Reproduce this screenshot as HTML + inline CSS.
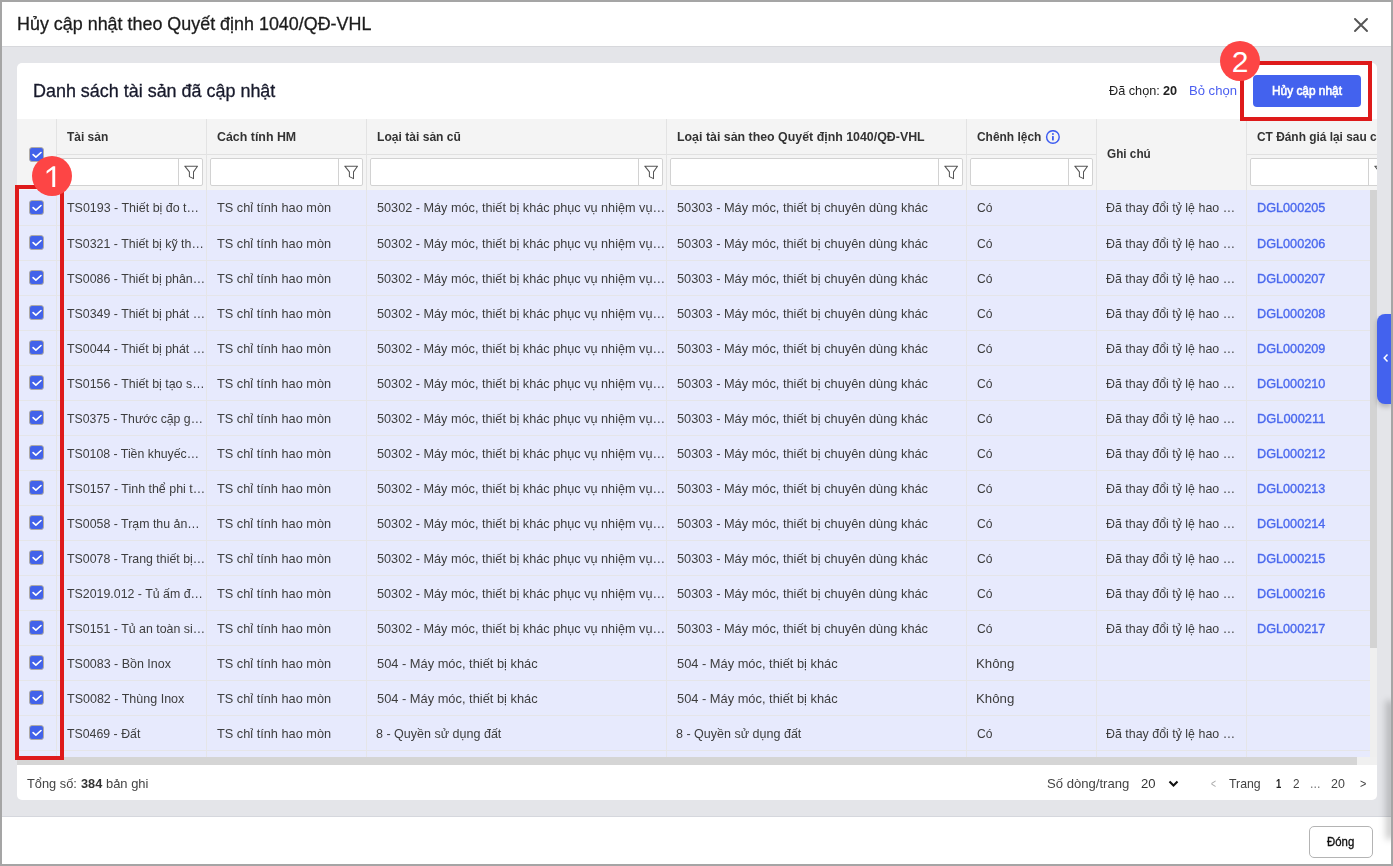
<!DOCTYPE html><html><head><meta charset="utf-8"><style>
*{box-sizing:border-box;margin:0;padding:0}
html,body{width:1393px;height:866px;overflow:hidden;background:#a5a5a5;font-family:"Liberation Sans",sans-serif;position:relative}
.a{position:absolute}
.t{position:absolute;white-space:nowrap;transform-origin:0 0}
.cb{position:absolute;width:15px;height:15px}
.inp{position:absolute;top:158px;height:28px;background:#fff;border:1px solid #d2d2d2;border-radius:2px}
.fb{position:absolute;right:0;top:0;width:24px;height:26px;border-left:1px solid #d2d2d2;display:flex;align-items:center;justify-content:center}
</style></head><body>

<div class="a" style="left:2px;top:2px;width:1389px;height:862px;background:#e4e5e9"></div>
<div class="a" style="left:2px;top:2px;width:1389px;height:44px;background:#fff"></div>
<div class="a" style="left:2px;top:46px;width:1389px;height:1px;background:#d7d8dc"></div>
<svg class="a" style="left:1354px;top:18px" width="14" height="14" viewBox="0 0 14 14"><path d="M1 1 L13 13 M13 1 L1 13" stroke="#555" stroke-width="1.9" stroke-linecap="round"/></svg>
<div class="a" style="left:17px;top:63px;width:1360px;height:737px;background:#fff;border-radius:5px;overflow:hidden"><div class="a" style="left:-17px;top:-63px;width:1393px;height:866px">
<div class="a" style="left:17px;top:119px;width:1360px;height:71px;background:#f4f4f4"></div>
<div class="a" style="left:57px;top:154px;width:1039px;height:1px;background:#e1e1e1"></div>
<div class="a" style="left:1247px;top:154px;width:130px;height:1px;background:#e1e1e1"></div>
<div class="a" style="left:56px;top:119px;width:1px;height:71px;background:#e3e3e3"></div>
<div class="a" style="left:206px;top:119px;width:1px;height:71px;background:#e3e3e3"></div>
<div class="a" style="left:366px;top:119px;width:1px;height:71px;background:#e3e3e3"></div>
<div class="a" style="left:666px;top:119px;width:1px;height:71px;background:#e3e3e3"></div>
<div class="a" style="left:966px;top:119px;width:1px;height:71px;background:#e3e3e3"></div>
<div class="a" style="left:1096px;top:119px;width:1px;height:71px;background:#e3e3e3"></div>
<div class="a" style="left:1246px;top:119px;width:1px;height:71px;background:#e3e3e3"></div>
<div class="inp" style="left:60px;width:143px"><div class="fb"><svg width="15" height="15" viewBox="0 0 15 15"><path d="M1.8 1.2 H14.5 L10.5 6.9 V13.6 L6.4 11.6 V6.9 Z" fill="none" stroke="#555" stroke-width="1.05" stroke-linejoin="round"/></svg></div></div>
<div class="inp" style="left:210px;width:153px"><div class="fb"><svg width="15" height="15" viewBox="0 0 15 15"><path d="M1.8 1.2 H14.5 L10.5 6.9 V13.6 L6.4 11.6 V6.9 Z" fill="none" stroke="#555" stroke-width="1.05" stroke-linejoin="round"/></svg></div></div>
<div class="inp" style="left:370px;width:293px"><div class="fb"><svg width="15" height="15" viewBox="0 0 15 15"><path d="M1.8 1.2 H14.5 L10.5 6.9 V13.6 L6.4 11.6 V6.9 Z" fill="none" stroke="#555" stroke-width="1.05" stroke-linejoin="round"/></svg></div></div>
<div class="inp" style="left:670px;width:293px"><div class="fb"><svg width="15" height="15" viewBox="0 0 15 15"><path d="M1.8 1.2 H14.5 L10.5 6.9 V13.6 L6.4 11.6 V6.9 Z" fill="none" stroke="#555" stroke-width="1.05" stroke-linejoin="round"/></svg></div></div>
<div class="inp" style="left:970px;width:123px"><div class="fb"><svg width="15" height="15" viewBox="0 0 15 15"><path d="M1.8 1.2 H14.5 L10.5 6.9 V13.6 L6.4 11.6 V6.9 Z" fill="none" stroke="#555" stroke-width="1.05" stroke-linejoin="round"/></svg></div></div>
<div class="inp" style="left:1250px;width:143px"><div class="fb"><svg width="15" height="15" viewBox="0 0 15 15"><path d="M1.8 1.2 H14.5 L10.5 6.9 V13.6 L6.4 11.6 V6.9 Z" fill="none" stroke="#555" stroke-width="1.05" stroke-linejoin="round"/></svg></div></div>
<div class="cb" style="left:29px;top:147px"><svg width="15" height="15" viewBox="0 0 15 15" style="position:absolute;left:0;top:0"><rect x="0.5" y="0.5" width="14" height="14" rx="2.6" fill="#4262ea" stroke="#b3ab9b" stroke-width="0.9"/><path d="M4.1 7.6 L6.9 10.1 L12 5.5" fill="none" stroke="#fff" stroke-width="1.65" stroke-linecap="round" stroke-linejoin="round"/></svg></div>
<svg class="a" style="left:1045px;top:130px" width="15" height="15" viewBox="0 0 15 15"><circle cx="7.9" cy="7.0" r="6.3" fill="none" stroke="#3d5cf0" stroke-width="1.45"/><rect x="7.0" y="3.2" width="1.8" height="1.6" fill="#3d5cf0"/><rect x="7.0" y="6.1" width="1.8" height="4.3" fill="#3d5cf0"/></svg>
<div class="a" style="left:1253px;top:75px;width:108px;height:32px;background:#4362ee;border-radius:4px"></div>
<div class="a" style="left:17px;top:190px;width:1353px;height:567px;overflow:hidden;background:#e7eafd"><div class="a" style="left:-17px;top:-190px;width:1393px;height:866px">
<div class="a" style="left:17px;top:225px;width:1353px;height:1px;background:#e5e5e8"></div>
<div class="a" style="left:17px;top:260px;width:1353px;height:1px;background:#e5e5e8"></div>
<div class="a" style="left:17px;top:295px;width:1353px;height:1px;background:#e5e5e8"></div>
<div class="a" style="left:17px;top:330px;width:1353px;height:1px;background:#e5e5e8"></div>
<div class="a" style="left:17px;top:365px;width:1353px;height:1px;background:#e5e5e8"></div>
<div class="a" style="left:17px;top:400px;width:1353px;height:1px;background:#e5e5e8"></div>
<div class="a" style="left:17px;top:435px;width:1353px;height:1px;background:#e5e5e8"></div>
<div class="a" style="left:17px;top:470px;width:1353px;height:1px;background:#e5e5e8"></div>
<div class="a" style="left:17px;top:505px;width:1353px;height:1px;background:#e5e5e8"></div>
<div class="a" style="left:17px;top:540px;width:1353px;height:1px;background:#e5e5e8"></div>
<div class="a" style="left:17px;top:575px;width:1353px;height:1px;background:#e5e5e8"></div>
<div class="a" style="left:17px;top:610px;width:1353px;height:1px;background:#e5e5e8"></div>
<div class="a" style="left:17px;top:645px;width:1353px;height:1px;background:#e5e5e8"></div>
<div class="a" style="left:17px;top:680px;width:1353px;height:1px;background:#e5e5e8"></div>
<div class="a" style="left:17px;top:715px;width:1353px;height:1px;background:#e5e5e8"></div>
<div class="a" style="left:17px;top:750px;width:1353px;height:1px;background:#e5e5e8"></div>
<div class="a" style="left:17px;top:785px;width:1353px;height:1px;background:#e5e5e8"></div>
<div class="a" style="left:56px;top:190px;width:1px;height:567px;background:#e5e5e8"></div>
<div class="a" style="left:206px;top:190px;width:1px;height:567px;background:#e5e5e8"></div>
<div class="a" style="left:366px;top:190px;width:1px;height:567px;background:#e5e5e8"></div>
<div class="a" style="left:666px;top:190px;width:1px;height:567px;background:#e5e5e8"></div>
<div class="a" style="left:966px;top:190px;width:1px;height:567px;background:#e5e5e8"></div>
<div class="a" style="left:1096px;top:190px;width:1px;height:567px;background:#e5e5e8"></div>
<div class="a" style="left:1246px;top:190px;width:1px;height:567px;background:#e5e5e8"></div>
<div class="cb" style="left:29px;top:200px"><svg width="15" height="15" viewBox="0 0 15 15" style="position:absolute;left:0;top:0"><rect x="0.5" y="0.5" width="14" height="14" rx="2.6" fill="#4262ea" stroke="#b3ab9b" stroke-width="0.9"/><path d="M4.1 7.6 L6.9 10.1 L12 5.5" fill="none" stroke="#fff" stroke-width="1.65" stroke-linecap="round" stroke-linejoin="round"/></svg></div>
<div class="cb" style="left:29px;top:235px"><svg width="15" height="15" viewBox="0 0 15 15" style="position:absolute;left:0;top:0"><rect x="0.5" y="0.5" width="14" height="14" rx="2.6" fill="#4262ea" stroke="#b3ab9b" stroke-width="0.9"/><path d="M4.1 7.6 L6.9 10.1 L12 5.5" fill="none" stroke="#fff" stroke-width="1.65" stroke-linecap="round" stroke-linejoin="round"/></svg></div>
<div class="cb" style="left:29px;top:270px"><svg width="15" height="15" viewBox="0 0 15 15" style="position:absolute;left:0;top:0"><rect x="0.5" y="0.5" width="14" height="14" rx="2.6" fill="#4262ea" stroke="#b3ab9b" stroke-width="0.9"/><path d="M4.1 7.6 L6.9 10.1 L12 5.5" fill="none" stroke="#fff" stroke-width="1.65" stroke-linecap="round" stroke-linejoin="round"/></svg></div>
<div class="cb" style="left:29px;top:305px"><svg width="15" height="15" viewBox="0 0 15 15" style="position:absolute;left:0;top:0"><rect x="0.5" y="0.5" width="14" height="14" rx="2.6" fill="#4262ea" stroke="#b3ab9b" stroke-width="0.9"/><path d="M4.1 7.6 L6.9 10.1 L12 5.5" fill="none" stroke="#fff" stroke-width="1.65" stroke-linecap="round" stroke-linejoin="round"/></svg></div>
<div class="cb" style="left:29px;top:340px"><svg width="15" height="15" viewBox="0 0 15 15" style="position:absolute;left:0;top:0"><rect x="0.5" y="0.5" width="14" height="14" rx="2.6" fill="#4262ea" stroke="#b3ab9b" stroke-width="0.9"/><path d="M4.1 7.6 L6.9 10.1 L12 5.5" fill="none" stroke="#fff" stroke-width="1.65" stroke-linecap="round" stroke-linejoin="round"/></svg></div>
<div class="cb" style="left:29px;top:375px"><svg width="15" height="15" viewBox="0 0 15 15" style="position:absolute;left:0;top:0"><rect x="0.5" y="0.5" width="14" height="14" rx="2.6" fill="#4262ea" stroke="#b3ab9b" stroke-width="0.9"/><path d="M4.1 7.6 L6.9 10.1 L12 5.5" fill="none" stroke="#fff" stroke-width="1.65" stroke-linecap="round" stroke-linejoin="round"/></svg></div>
<div class="cb" style="left:29px;top:410px"><svg width="15" height="15" viewBox="0 0 15 15" style="position:absolute;left:0;top:0"><rect x="0.5" y="0.5" width="14" height="14" rx="2.6" fill="#4262ea" stroke="#b3ab9b" stroke-width="0.9"/><path d="M4.1 7.6 L6.9 10.1 L12 5.5" fill="none" stroke="#fff" stroke-width="1.65" stroke-linecap="round" stroke-linejoin="round"/></svg></div>
<div class="cb" style="left:29px;top:445px"><svg width="15" height="15" viewBox="0 0 15 15" style="position:absolute;left:0;top:0"><rect x="0.5" y="0.5" width="14" height="14" rx="2.6" fill="#4262ea" stroke="#b3ab9b" stroke-width="0.9"/><path d="M4.1 7.6 L6.9 10.1 L12 5.5" fill="none" stroke="#fff" stroke-width="1.65" stroke-linecap="round" stroke-linejoin="round"/></svg></div>
<div class="cb" style="left:29px;top:480px"><svg width="15" height="15" viewBox="0 0 15 15" style="position:absolute;left:0;top:0"><rect x="0.5" y="0.5" width="14" height="14" rx="2.6" fill="#4262ea" stroke="#b3ab9b" stroke-width="0.9"/><path d="M4.1 7.6 L6.9 10.1 L12 5.5" fill="none" stroke="#fff" stroke-width="1.65" stroke-linecap="round" stroke-linejoin="round"/></svg></div>
<div class="cb" style="left:29px;top:515px"><svg width="15" height="15" viewBox="0 0 15 15" style="position:absolute;left:0;top:0"><rect x="0.5" y="0.5" width="14" height="14" rx="2.6" fill="#4262ea" stroke="#b3ab9b" stroke-width="0.9"/><path d="M4.1 7.6 L6.9 10.1 L12 5.5" fill="none" stroke="#fff" stroke-width="1.65" stroke-linecap="round" stroke-linejoin="round"/></svg></div>
<div class="cb" style="left:29px;top:550px"><svg width="15" height="15" viewBox="0 0 15 15" style="position:absolute;left:0;top:0"><rect x="0.5" y="0.5" width="14" height="14" rx="2.6" fill="#4262ea" stroke="#b3ab9b" stroke-width="0.9"/><path d="M4.1 7.6 L6.9 10.1 L12 5.5" fill="none" stroke="#fff" stroke-width="1.65" stroke-linecap="round" stroke-linejoin="round"/></svg></div>
<div class="cb" style="left:29px;top:585px"><svg width="15" height="15" viewBox="0 0 15 15" style="position:absolute;left:0;top:0"><rect x="0.5" y="0.5" width="14" height="14" rx="2.6" fill="#4262ea" stroke="#b3ab9b" stroke-width="0.9"/><path d="M4.1 7.6 L6.9 10.1 L12 5.5" fill="none" stroke="#fff" stroke-width="1.65" stroke-linecap="round" stroke-linejoin="round"/></svg></div>
<div class="cb" style="left:29px;top:620px"><svg width="15" height="15" viewBox="0 0 15 15" style="position:absolute;left:0;top:0"><rect x="0.5" y="0.5" width="14" height="14" rx="2.6" fill="#4262ea" stroke="#b3ab9b" stroke-width="0.9"/><path d="M4.1 7.6 L6.9 10.1 L12 5.5" fill="none" stroke="#fff" stroke-width="1.65" stroke-linecap="round" stroke-linejoin="round"/></svg></div>
<div class="cb" style="left:29px;top:655px"><svg width="15" height="15" viewBox="0 0 15 15" style="position:absolute;left:0;top:0"><rect x="0.5" y="0.5" width="14" height="14" rx="2.6" fill="#4262ea" stroke="#b3ab9b" stroke-width="0.9"/><path d="M4.1 7.6 L6.9 10.1 L12 5.5" fill="none" stroke="#fff" stroke-width="1.65" stroke-linecap="round" stroke-linejoin="round"/></svg></div>
<div class="cb" style="left:29px;top:690px"><svg width="15" height="15" viewBox="0 0 15 15" style="position:absolute;left:0;top:0"><rect x="0.5" y="0.5" width="14" height="14" rx="2.6" fill="#4262ea" stroke="#b3ab9b" stroke-width="0.9"/><path d="M4.1 7.6 L6.9 10.1 L12 5.5" fill="none" stroke="#fff" stroke-width="1.65" stroke-linecap="round" stroke-linejoin="round"/></svg></div>
<div class="cb" style="left:29px;top:725px"><svg width="15" height="15" viewBox="0 0 15 15" style="position:absolute;left:0;top:0"><rect x="0.5" y="0.5" width="14" height="14" rx="2.6" fill="#4262ea" stroke="#b3ab9b" stroke-width="0.9"/><path d="M4.1 7.6 L6.9 10.1 L12 5.5" fill="none" stroke="#fff" stroke-width="1.65" stroke-linecap="round" stroke-linejoin="round"/></svg></div>
<div class="t" style="left:66.50px;top:200.00px;font-size:13px;line-height:16px;color:#3d3d3d;transform:scaleX(0.9583)">TS0193 - Thiết bị đo t…</div>
<div class="t" style="left:216.90px;top:200.00px;font-size:13px;line-height:16px;color:#3d3d3d;transform:scaleX(0.9810)">TS chỉ tính hao mòn</div>
<div class="t" style="left:377.30px;top:200.00px;font-size:13px;line-height:16px;color:#3d3d3d;transform:scaleX(0.9751)">50302 - Máy móc, thiết bị khác phục vụ nhiệm vụ…</div>
<div class="t" style="left:677.10px;top:200.00px;font-size:13px;line-height:16px;color:#3d3d3d;transform:scaleX(0.9840)">50303 - Máy móc, thiết bị chuyên dùng khác</div>
<div class="t" style="left:976.60px;top:200.00px;font-size:13px;line-height:16px;color:#3d3d3d;transform:scaleX(0.9275)">Có</div>
<div class="t" style="left:1106.40px;top:200.00px;font-size:13px;line-height:16px;color:#3d3d3d;transform:scaleX(0.9551)">Đã thay đổi tỷ lệ hao …</div>
<div class="t" style="left:1256.63px;top:200.00px;font-size:13px;line-height:16px;color:#4a68ee;-webkit-text-stroke:0.36px #4a68ee;transform:scaleX(0.9742)">DGL000205</div>
<div class="t" style="left:66.50px;top:236.00px;font-size:13px;line-height:16px;color:#3d3d3d;transform:scaleX(0.9532)">TS0321 - Thiết bị kỹ th…</div>
<div class="t" style="left:216.90px;top:236.00px;font-size:13px;line-height:16px;color:#3d3d3d;transform:scaleX(0.9810)">TS chỉ tính hao mòn</div>
<div class="t" style="left:377.30px;top:236.00px;font-size:13px;line-height:16px;color:#3d3d3d;transform:scaleX(0.9751)">50302 - Máy móc, thiết bị khác phục vụ nhiệm vụ…</div>
<div class="t" style="left:677.10px;top:236.00px;font-size:13px;line-height:16px;color:#3d3d3d;transform:scaleX(0.9840)">50303 - Máy móc, thiết bị chuyên dùng khác</div>
<div class="t" style="left:976.60px;top:236.00px;font-size:13px;line-height:16px;color:#3d3d3d;transform:scaleX(0.9275)">Có</div>
<div class="t" style="left:1106.40px;top:236.00px;font-size:13px;line-height:16px;color:#3d3d3d;transform:scaleX(0.9551)">Đã thay đổi tỷ lệ hao …</div>
<div class="t" style="left:1256.63px;top:236.00px;font-size:13px;line-height:16px;color:#4a68ee;-webkit-text-stroke:0.36px #4a68ee;transform:scaleX(0.9742)">DGL000206</div>
<div class="t" style="left:66.50px;top:271.00px;font-size:13px;line-height:16px;color:#3d3d3d;transform:scaleX(0.9525)">TS0086 - Thiết bị phân…</div>
<div class="t" style="left:216.90px;top:271.00px;font-size:13px;line-height:16px;color:#3d3d3d;transform:scaleX(0.9810)">TS chỉ tính hao mòn</div>
<div class="t" style="left:377.30px;top:271.00px;font-size:13px;line-height:16px;color:#3d3d3d;transform:scaleX(0.9751)">50302 - Máy móc, thiết bị khác phục vụ nhiệm vụ…</div>
<div class="t" style="left:677.10px;top:271.00px;font-size:13px;line-height:16px;color:#3d3d3d;transform:scaleX(0.9840)">50303 - Máy móc, thiết bị chuyên dùng khác</div>
<div class="t" style="left:976.60px;top:271.00px;font-size:13px;line-height:16px;color:#3d3d3d;transform:scaleX(0.9275)">Có</div>
<div class="t" style="left:1106.40px;top:271.00px;font-size:13px;line-height:16px;color:#3d3d3d;transform:scaleX(0.9551)">Đã thay đổi tỷ lệ hao …</div>
<div class="t" style="left:1256.63px;top:271.00px;font-size:13px;line-height:16px;color:#4a68ee;-webkit-text-stroke:0.36px #4a68ee;transform:scaleX(0.9742)">DGL000207</div>
<div class="t" style="left:66.50px;top:306.00px;font-size:13px;line-height:16px;color:#3d3d3d;transform:scaleX(0.9526)">TS0349 - Thiết bị phát …</div>
<div class="t" style="left:216.90px;top:306.00px;font-size:13px;line-height:16px;color:#3d3d3d;transform:scaleX(0.9810)">TS chỉ tính hao mòn</div>
<div class="t" style="left:377.30px;top:306.00px;font-size:13px;line-height:16px;color:#3d3d3d;transform:scaleX(0.9751)">50302 - Máy móc, thiết bị khác phục vụ nhiệm vụ…</div>
<div class="t" style="left:677.10px;top:306.00px;font-size:13px;line-height:16px;color:#3d3d3d;transform:scaleX(0.9840)">50303 - Máy móc, thiết bị chuyên dùng khác</div>
<div class="t" style="left:976.60px;top:306.00px;font-size:13px;line-height:16px;color:#3d3d3d;transform:scaleX(0.9275)">Có</div>
<div class="t" style="left:1106.40px;top:306.00px;font-size:13px;line-height:16px;color:#3d3d3d;transform:scaleX(0.9551)">Đã thay đổi tỷ lệ hao …</div>
<div class="t" style="left:1256.63px;top:306.00px;font-size:13px;line-height:16px;color:#4a68ee;-webkit-text-stroke:0.36px #4a68ee;transform:scaleX(0.9742)">DGL000208</div>
<div class="t" style="left:66.50px;top:341.00px;font-size:13px;line-height:16px;color:#3d3d3d;transform:scaleX(0.9526)">TS0044 - Thiết bị phát …</div>
<div class="t" style="left:216.90px;top:341.00px;font-size:13px;line-height:16px;color:#3d3d3d;transform:scaleX(0.9810)">TS chỉ tính hao mòn</div>
<div class="t" style="left:377.30px;top:341.00px;font-size:13px;line-height:16px;color:#3d3d3d;transform:scaleX(0.9751)">50302 - Máy móc, thiết bị khác phục vụ nhiệm vụ…</div>
<div class="t" style="left:677.10px;top:341.00px;font-size:13px;line-height:16px;color:#3d3d3d;transform:scaleX(0.9840)">50303 - Máy móc, thiết bị chuyên dùng khác</div>
<div class="t" style="left:976.60px;top:341.00px;font-size:13px;line-height:16px;color:#3d3d3d;transform:scaleX(0.9275)">Có</div>
<div class="t" style="left:1106.40px;top:341.00px;font-size:13px;line-height:16px;color:#3d3d3d;transform:scaleX(0.9551)">Đã thay đổi tỷ lệ hao …</div>
<div class="t" style="left:1256.63px;top:341.00px;font-size:13px;line-height:16px;color:#4a68ee;-webkit-text-stroke:0.36px #4a68ee;transform:scaleX(0.9742)">DGL000209</div>
<div class="t" style="left:66.50px;top:376.00px;font-size:13px;line-height:16px;color:#3d3d3d;transform:scaleX(0.9532)">TS0156 - Thiết bị tạo s…</div>
<div class="t" style="left:216.90px;top:376.00px;font-size:13px;line-height:16px;color:#3d3d3d;transform:scaleX(0.9810)">TS chỉ tính hao mòn</div>
<div class="t" style="left:377.30px;top:376.00px;font-size:13px;line-height:16px;color:#3d3d3d;transform:scaleX(0.9751)">50302 - Máy móc, thiết bị khác phục vụ nhiệm vụ…</div>
<div class="t" style="left:677.10px;top:376.00px;font-size:13px;line-height:16px;color:#3d3d3d;transform:scaleX(0.9840)">50303 - Máy móc, thiết bị chuyên dùng khác</div>
<div class="t" style="left:976.60px;top:376.00px;font-size:13px;line-height:16px;color:#3d3d3d;transform:scaleX(0.9275)">Có</div>
<div class="t" style="left:1106.40px;top:376.00px;font-size:13px;line-height:16px;color:#3d3d3d;transform:scaleX(0.9551)">Đã thay đổi tỷ lệ hao …</div>
<div class="t" style="left:1256.63px;top:376.00px;font-size:13px;line-height:16px;color:#4a68ee;-webkit-text-stroke:0.36px #4a68ee;transform:scaleX(0.9742)">DGL000210</div>
<div class="t" style="left:66.50px;top:411.00px;font-size:13px;line-height:16px;color:#3d3d3d;transform:scaleX(0.9428)">TS0375 - Thước cặp g…</div>
<div class="t" style="left:216.90px;top:411.00px;font-size:13px;line-height:16px;color:#3d3d3d;transform:scaleX(0.9810)">TS chỉ tính hao mòn</div>
<div class="t" style="left:377.30px;top:411.00px;font-size:13px;line-height:16px;color:#3d3d3d;transform:scaleX(0.9751)">50302 - Máy móc, thiết bị khác phục vụ nhiệm vụ…</div>
<div class="t" style="left:677.10px;top:411.00px;font-size:13px;line-height:16px;color:#3d3d3d;transform:scaleX(0.9840)">50303 - Máy móc, thiết bị chuyên dùng khác</div>
<div class="t" style="left:976.60px;top:411.00px;font-size:13px;line-height:16px;color:#3d3d3d;transform:scaleX(0.9275)">Có</div>
<div class="t" style="left:1106.40px;top:411.00px;font-size:13px;line-height:16px;color:#3d3d3d;transform:scaleX(0.9551)">Đã thay đổi tỷ lệ hao …</div>
<div class="t" style="left:1256.61px;top:411.00px;font-size:13px;line-height:16px;color:#4a68ee;-webkit-text-stroke:0.36px #4a68ee;transform:scaleX(0.9880)">DGL000211</div>
<div class="t" style="left:66.50px;top:446.00px;font-size:13px;line-height:16px;color:#3d3d3d;transform:scaleX(0.9467)">TS0108 - Tiền khuyếc…</div>
<div class="t" style="left:216.90px;top:446.00px;font-size:13px;line-height:16px;color:#3d3d3d;transform:scaleX(0.9810)">TS chỉ tính hao mòn</div>
<div class="t" style="left:377.30px;top:446.00px;font-size:13px;line-height:16px;color:#3d3d3d;transform:scaleX(0.9751)">50302 - Máy móc, thiết bị khác phục vụ nhiệm vụ…</div>
<div class="t" style="left:677.10px;top:446.00px;font-size:13px;line-height:16px;color:#3d3d3d;transform:scaleX(0.9840)">50303 - Máy móc, thiết bị chuyên dùng khác</div>
<div class="t" style="left:976.60px;top:446.00px;font-size:13px;line-height:16px;color:#3d3d3d;transform:scaleX(0.9275)">Có</div>
<div class="t" style="left:1106.40px;top:446.00px;font-size:13px;line-height:16px;color:#3d3d3d;transform:scaleX(0.9551)">Đã thay đổi tỷ lệ hao …</div>
<div class="t" style="left:1256.63px;top:446.00px;font-size:13px;line-height:16px;color:#4a68ee;-webkit-text-stroke:0.36px #4a68ee;transform:scaleX(0.9742)">DGL000212</div>
<div class="t" style="left:66.50px;top:481.00px;font-size:13px;line-height:16px;color:#3d3d3d;transform:scaleX(0.9558)">TS0157 - Tinh thể phi t…</div>
<div class="t" style="left:216.90px;top:481.00px;font-size:13px;line-height:16px;color:#3d3d3d;transform:scaleX(0.9810)">TS chỉ tính hao mòn</div>
<div class="t" style="left:377.30px;top:481.00px;font-size:13px;line-height:16px;color:#3d3d3d;transform:scaleX(0.9751)">50302 - Máy móc, thiết bị khác phục vụ nhiệm vụ…</div>
<div class="t" style="left:677.10px;top:481.00px;font-size:13px;line-height:16px;color:#3d3d3d;transform:scaleX(0.9840)">50303 - Máy móc, thiết bị chuyên dùng khác</div>
<div class="t" style="left:976.60px;top:481.00px;font-size:13px;line-height:16px;color:#3d3d3d;transform:scaleX(0.9275)">Có</div>
<div class="t" style="left:1106.40px;top:481.00px;font-size:13px;line-height:16px;color:#3d3d3d;transform:scaleX(0.9551)">Đã thay đổi tỷ lệ hao …</div>
<div class="t" style="left:1256.63px;top:481.00px;font-size:13px;line-height:16px;color:#4a68ee;-webkit-text-stroke:0.36px #4a68ee;transform:scaleX(0.9742)">DGL000213</div>
<div class="t" style="left:66.50px;top:516.00px;font-size:13px;line-height:16px;color:#3d3d3d;transform:scaleX(0.9511)">TS0058 - Trạm thu ản…</div>
<div class="t" style="left:216.90px;top:516.00px;font-size:13px;line-height:16px;color:#3d3d3d;transform:scaleX(0.9810)">TS chỉ tính hao mòn</div>
<div class="t" style="left:377.30px;top:516.00px;font-size:13px;line-height:16px;color:#3d3d3d;transform:scaleX(0.9751)">50302 - Máy móc, thiết bị khác phục vụ nhiệm vụ…</div>
<div class="t" style="left:677.10px;top:516.00px;font-size:13px;line-height:16px;color:#3d3d3d;transform:scaleX(0.9840)">50303 - Máy móc, thiết bị chuyên dùng khác</div>
<div class="t" style="left:976.60px;top:516.00px;font-size:13px;line-height:16px;color:#3d3d3d;transform:scaleX(0.9275)">Có</div>
<div class="t" style="left:1106.40px;top:516.00px;font-size:13px;line-height:16px;color:#3d3d3d;transform:scaleX(0.9551)">Đã thay đổi tỷ lệ hao …</div>
<div class="t" style="left:1256.63px;top:516.00px;font-size:13px;line-height:16px;color:#4a68ee;-webkit-text-stroke:0.36px #4a68ee;transform:scaleX(0.9742)">DGL000214</div>
<div class="t" style="left:66.50px;top:551.00px;font-size:13px;line-height:16px;color:#3d3d3d;transform:scaleX(0.9510)">TS0078 - Trang thiết bị…</div>
<div class="t" style="left:216.90px;top:551.00px;font-size:13px;line-height:16px;color:#3d3d3d;transform:scaleX(0.9810)">TS chỉ tính hao mòn</div>
<div class="t" style="left:377.30px;top:551.00px;font-size:13px;line-height:16px;color:#3d3d3d;transform:scaleX(0.9751)">50302 - Máy móc, thiết bị khác phục vụ nhiệm vụ…</div>
<div class="t" style="left:677.10px;top:551.00px;font-size:13px;line-height:16px;color:#3d3d3d;transform:scaleX(0.9840)">50303 - Máy móc, thiết bị chuyên dùng khác</div>
<div class="t" style="left:976.60px;top:551.00px;font-size:13px;line-height:16px;color:#3d3d3d;transform:scaleX(0.9275)">Có</div>
<div class="t" style="left:1106.40px;top:551.00px;font-size:13px;line-height:16px;color:#3d3d3d;transform:scaleX(0.9551)">Đã thay đổi tỷ lệ hao …</div>
<div class="t" style="left:1256.63px;top:551.00px;font-size:13px;line-height:16px;color:#4a68ee;-webkit-text-stroke:0.36px #4a68ee;transform:scaleX(0.9742)">DGL000215</div>
<div class="t" style="left:66.50px;top:586.00px;font-size:13px;line-height:16px;color:#3d3d3d;transform:scaleX(0.9516)">TS2019.012 - Tủ ấm đ…</div>
<div class="t" style="left:216.90px;top:586.00px;font-size:13px;line-height:16px;color:#3d3d3d;transform:scaleX(0.9810)">TS chỉ tính hao mòn</div>
<div class="t" style="left:377.30px;top:586.00px;font-size:13px;line-height:16px;color:#3d3d3d;transform:scaleX(0.9751)">50302 - Máy móc, thiết bị khác phục vụ nhiệm vụ…</div>
<div class="t" style="left:677.10px;top:586.00px;font-size:13px;line-height:16px;color:#3d3d3d;transform:scaleX(0.9840)">50303 - Máy móc, thiết bị chuyên dùng khác</div>
<div class="t" style="left:976.60px;top:586.00px;font-size:13px;line-height:16px;color:#3d3d3d;transform:scaleX(0.9275)">Có</div>
<div class="t" style="left:1106.40px;top:586.00px;font-size:13px;line-height:16px;color:#3d3d3d;transform:scaleX(0.9551)">Đã thay đổi tỷ lệ hao …</div>
<div class="t" style="left:1256.63px;top:586.00px;font-size:13px;line-height:16px;color:#4a68ee;-webkit-text-stroke:0.36px #4a68ee;transform:scaleX(0.9742)">DGL000216</div>
<div class="t" style="left:66.50px;top:621.00px;font-size:13px;line-height:16px;color:#3d3d3d;transform:scaleX(0.9526)">TS0151 - Tủ an toàn si…</div>
<div class="t" style="left:216.90px;top:621.00px;font-size:13px;line-height:16px;color:#3d3d3d;transform:scaleX(0.9810)">TS chỉ tính hao mòn</div>
<div class="t" style="left:377.30px;top:621.00px;font-size:13px;line-height:16px;color:#3d3d3d;transform:scaleX(0.9751)">50302 - Máy móc, thiết bị khác phục vụ nhiệm vụ…</div>
<div class="t" style="left:677.10px;top:621.00px;font-size:13px;line-height:16px;color:#3d3d3d;transform:scaleX(0.9840)">50303 - Máy móc, thiết bị chuyên dùng khác</div>
<div class="t" style="left:976.60px;top:621.00px;font-size:13px;line-height:16px;color:#3d3d3d;transform:scaleX(0.9275)">Có</div>
<div class="t" style="left:1106.40px;top:621.00px;font-size:13px;line-height:16px;color:#3d3d3d;transform:scaleX(0.9551)">Đã thay đổi tỷ lệ hao …</div>
<div class="t" style="left:1256.63px;top:621.00px;font-size:13px;line-height:16px;color:#4a68ee;-webkit-text-stroke:0.36px #4a68ee;transform:scaleX(0.9742)">DGL000217</div>
<div class="t" style="left:66.50px;top:656.00px;font-size:13px;line-height:16px;color:#3d3d3d;transform:scaleX(0.9587)">TS0083 - Bồn Inox</div>
<div class="t" style="left:216.90px;top:656.00px;font-size:13px;line-height:16px;color:#3d3d3d;transform:scaleX(0.9810)">TS chỉ tính hao mòn</div>
<div class="t" style="left:376.50px;top:656.00px;font-size:13px;line-height:16px;color:#3d3d3d;transform:scaleX(0.9879)">504 - Máy móc, thiết bị khác</div>
<div class="t" style="left:676.50px;top:656.00px;font-size:13px;line-height:16px;color:#3d3d3d;transform:scaleX(0.9879)">504 - Máy móc, thiết bị khác</div>
<div class="t" style="left:975.78px;top:656.00px;font-size:13px;line-height:16px;color:#3d3d3d;transform:scaleX(1.0176)">Không</div>
<div class="t" style="left:66.50px;top:691.00px;font-size:13px;line-height:16px;color:#3d3d3d;transform:scaleX(0.9623)">TS0082 - Thùng Inox</div>
<div class="t" style="left:216.90px;top:691.00px;font-size:13px;line-height:16px;color:#3d3d3d;transform:scaleX(0.9810)">TS chỉ tính hao mòn</div>
<div class="t" style="left:376.50px;top:691.00px;font-size:13px;line-height:16px;color:#3d3d3d;transform:scaleX(0.9879)">504 - Máy móc, thiết bị khác</div>
<div class="t" style="left:676.50px;top:691.00px;font-size:13px;line-height:16px;color:#3d3d3d;transform:scaleX(0.9879)">504 - Máy móc, thiết bị khác</div>
<div class="t" style="left:975.78px;top:691.00px;font-size:13px;line-height:16px;color:#3d3d3d;transform:scaleX(1.0176)">Không</div>
<div class="t" style="left:66.50px;top:726.00px;font-size:13px;line-height:16px;color:#3d3d3d;transform:scaleX(0.9485)">TS0469 - Đất</div>
<div class="t" style="left:216.90px;top:726.00px;font-size:13px;line-height:16px;color:#3d3d3d;transform:scaleX(0.9810)">TS chỉ tính hao mòn</div>
<div class="t" style="left:376.40px;top:726.00px;font-size:13px;line-height:16px;color:#3d3d3d;transform:scaleX(0.9632)">8 - Quyền sử dụng đất</div>
<div class="t" style="left:676.40px;top:726.00px;font-size:13px;line-height:16px;color:#3d3d3d;transform:scaleX(0.9632)">8 - Quyền sử dụng đất</div>
<div class="t" style="left:976.60px;top:726.00px;font-size:13px;line-height:16px;color:#3d3d3d;transform:scaleX(0.9275)">Có</div>
<div class="t" style="left:1106.40px;top:726.00px;font-size:13px;line-height:16px;color:#3d3d3d;transform:scaleX(0.9551)">Đã thay đổi tỷ lệ hao …</div>
</div></div>
<div class="a" style="left:1370px;top:190px;width:7px;height:567px;background:#efefef"></div>
<div class="a" style="left:1370px;top:190px;width:7px;height:458px;background:#d3d3d3"></div>
<div class="a" style="left:17px;top:757px;width:1360px;height:8px;background:#f0f0f0"></div>
<div class="a" style="left:17px;top:757px;width:1340px;height:8px;background:#d5d5d5"></div>
<svg class="a" style="left:1168px;top:779.5px" width="11" height="8" viewBox="0 0 11 8"><path d="M1.5 1.5 L5.5 5.5 L9.5 1.5" fill="none" stroke="#111" stroke-width="2.1"/></svg>
<div class="t" style="left:32.71px;top:80.00px;font-size:18.2px;line-height:23px;color:#17192b;-webkit-text-stroke:0.3px #17192b;transform:scaleX(0.9863)">Danh sách tài sản đã cập nhật</div>
<div class="t" style="left:1108.70px;top:83.00px;font-size:13px;line-height:16px;color:#222;transform:scaleX(0.9763)">Đã chọn:</div>
<div class="t" style="left:1163.00px;top:83.00px;font-size:13px;line-height:16px;color:#222;font-weight:bold;transform:scaleX(0.9768)">20</div>
<div class="t" style="left:1189.00px;top:83.00px;font-size:13px;line-height:16px;color:#4a5ef0;transform:scaleX(1.0049)">Bỏ chọn</div>
<div class="t" style="left:1271.75px;top:83.00px;font-size:12.5px;line-height:16px;color:#fff;-webkit-text-stroke:0.6px #fff;transform:scaleX(0.9497)">Hủy cập nhật</div>
<div class="t" style="left:67.10px;top:129.00px;font-size:13px;line-height:16px;color:#333;font-weight:bold;transform:scaleX(0.9208)">Tài sản</div>
<div class="t" style="left:217.40px;top:129.00px;font-size:13px;line-height:16px;color:#333;font-weight:bold;transform:scaleX(0.9535)">Cách tính HM</div>
<div class="t" style="left:377.20px;top:129.00px;font-size:13px;line-height:16px;color:#333;font-weight:bold;transform:scaleX(0.9296)">Loại tài sản cũ</div>
<div class="t" style="left:677.40px;top:129.00px;font-size:13px;line-height:16px;color:#333;font-weight:bold;transform:scaleX(0.9523)">Loại tài sản theo Quyết định 1040/QĐ-VHL</div>
<div class="t" style="left:977.30px;top:129.00px;font-size:13px;line-height:16px;color:#333;font-weight:bold;transform:scaleX(0.9184)">Chênh lệch</div>
<div class="t" style="left:1107.20px;top:146.00px;font-size:13px;line-height:16px;color:#333;font-weight:bold;transform:scaleX(0.9041)">Ghi chú</div>
<div class="t" style="left:1257.30px;top:129.00px;font-size:13px;line-height:16px;color:#333;font-weight:bold;transform:scaleX(0.9150)">CT Đánh giá lại sau cập nhật</div>
<div class="t" style="left:27.30px;top:776.00px;font-size:13px;line-height:16px;color:#444;transform:scaleX(0.9845)">Tổng số:</div>
<div class="t" style="left:80.50px;top:776.00px;font-size:13px;line-height:16px;color:#333;font-weight:bold;transform:scaleX(0.9795)">384</div>
<div class="t" style="left:106.00px;top:776.00px;font-size:13px;line-height:16px;color:#444;transform:scaleX(0.9939)">bản ghi</div>
<div class="t" style="left:1047.10px;top:776.00px;font-size:13px;line-height:16px;color:#444;transform:scaleX(1.0080)">Số dòng/trang</div>
<div class="t" style="left:1140.60px;top:776.00px;font-size:13px;line-height:16px;color:#333;transform:scaleX(1.0049)">20</div>
<div class="t" style="left:1211.40px;top:777.00px;font-size:12px;line-height:15px;color:#aaa;transform:scaleX(0.7143)">&lt;</div>
<div class="t" style="left:1228.50px;top:776.00px;font-size:13px;line-height:16px;color:#444;transform:scaleX(0.9444)">Trang</div>
<div class="t" style="left:1276.20px;top:776.00px;font-size:13px;line-height:16px;color:#222;font-weight:bold;transform:scaleX(0.7286)">1</div>
<div class="t" style="left:1293.30px;top:776.00px;font-size:13px;line-height:16px;color:#444;transform:scaleX(0.9000)">2</div>
<div class="t" style="left:1309.95px;top:776.00px;font-size:13px;line-height:16px;color:#777;transform:scaleX(0.9541)">...</div>
<div class="t" style="left:1331.00px;top:776.00px;font-size:13px;line-height:16px;color:#444;transform:scaleX(0.9557)">20</div>
<div class="t" style="left:1360.40px;top:777.00px;font-size:12px;line-height:15px;color:#444;transform:scaleX(0.9000)">&gt;</div>
</div></div>
<div class="a" style="left:2px;top:816px;width:1389px;height:1px;background:#d5d7dd"></div>
<div class="a" style="left:2px;top:817px;width:1389px;height:47px;background:#fff"></div>
<div class="a" style="left:1309px;top:826px;width:64px;height:32px;border:1px solid #b4b4b4;border-radius:5px;background:#fff"></div>
<div class="a" style="left:1377px;top:314px;width:14px;height:90px;background:#4362ee;border-radius:8px 0 0 8px;box-shadow:0 3px 5px rgba(0,0,0,.22)"></div>
<svg class="a" style="left:1381.5px;top:353px" width="8" height="10" viewBox="0 0 8 10"><path d="M5.5 1.5 L2.2 5 L5.5 8.5" fill="none" stroke="#fff" stroke-width="1.5"/></svg>
<div class="t" style="left:16.92px;top:13.00px;font-size:18.2px;line-height:23px;color:#1c1c1c;-webkit-text-stroke:0.3px #1c1c1c;transform:scaleX(0.9847)">Hủy cập nhật theo Quyết định 1040/QĐ-VHL</div>
<div class="t" style="left:1327.30px;top:834.00px;font-size:12.5px;line-height:16px;color:#111;-webkit-text-stroke:0.35px #111;transform:scaleX(0.9121)">Đóng</div>
<div class="a" style="left:1383px;top:700px;width:10px;height:140px;background:linear-gradient(to right, rgba(0,0,0,0), rgba(0,0,0,.32));filter:blur(3px);border-radius:6px"></div>
<div class="a" style="left:1391px;top:0;width:2px;height:866px;background:#a5a5a5"></div>
<div class="a" style="left:15px;top:185px;width:49px;height:575px;border:4px solid #de1a1a"></div>
<div class="a" style="left:1240px;top:61px;width:132px;height:60px;border:4px solid #de1a1a"></div>
<div class="a" style="left:32px;top:156px;width:40px;height:40px;border-radius:50%;background:#fd4545"></div>
<div class="a" style="left:1220px;top:41px;width:40px;height:40px;border-radius:50%;background:#fd4545"></div>
<svg class="a" style="left:0;top:0" width="80" height="200" viewBox="0 0 80 200"><polygon points="55.2,166.2 53.0,166.2 46.6,171.1 46.6,173.8 52.3,169.6 52.3,187.1 55.2,187.1" fill="#fff"/></svg>
<div class="t" style="left:1220px;top:41px;width:40px;font-size:30px;line-height:41px;text-align:center;color:#fff">2</div>
</body></html>
